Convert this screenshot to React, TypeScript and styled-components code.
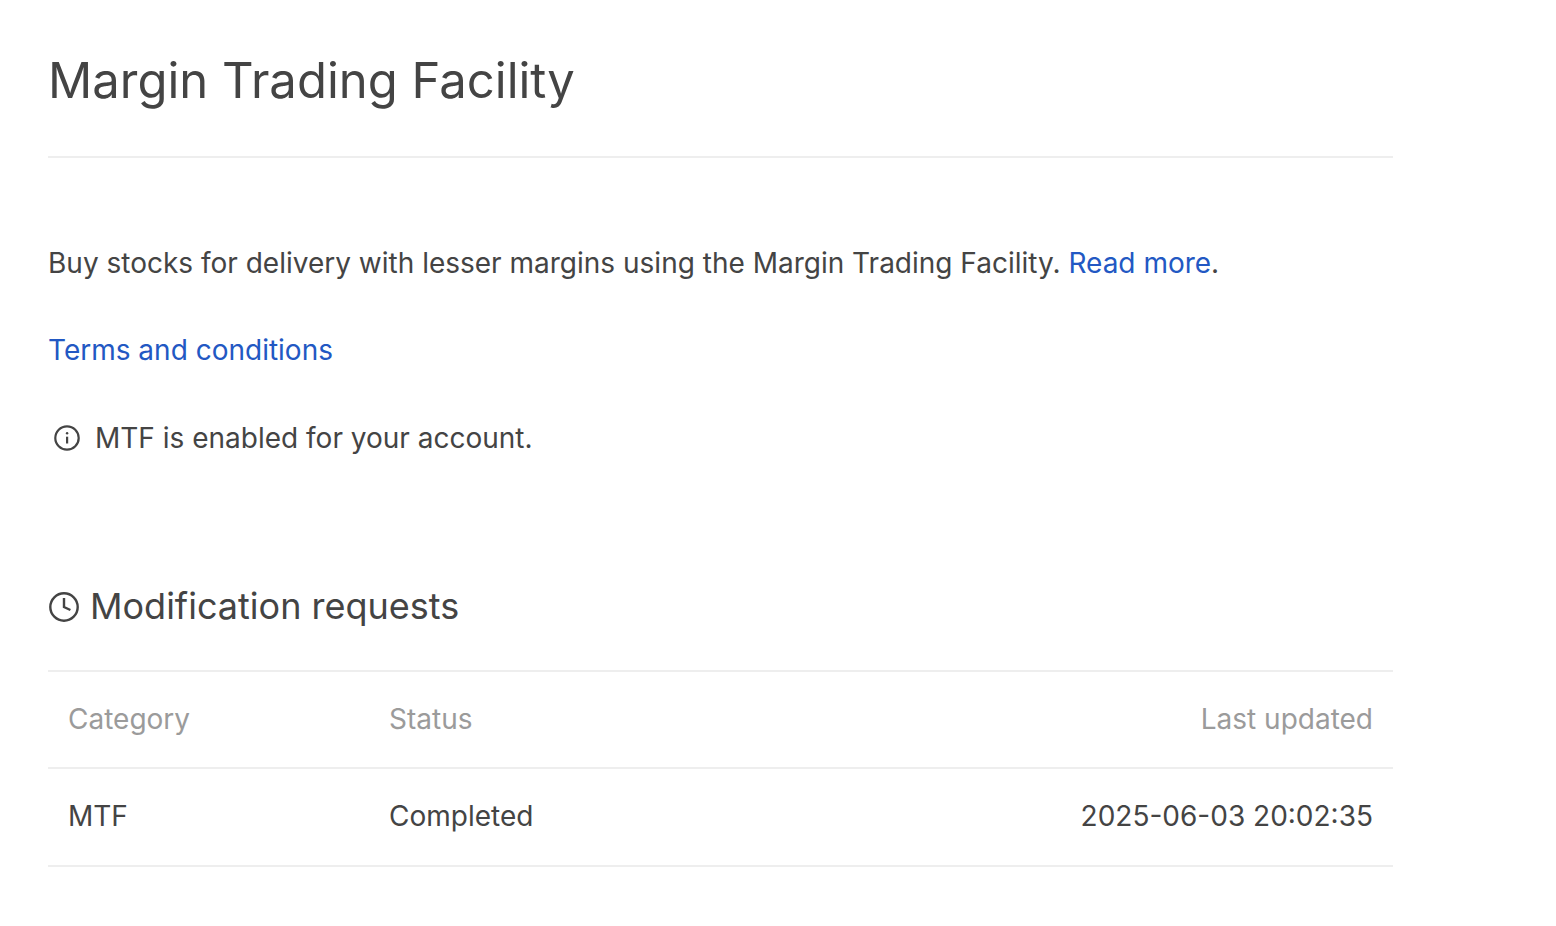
import React from "react";
import styled, { createGlobalStyle } from "styled-components";

const GlobalStyle = createGlobalStyle`
  *, *::before, *::after { box-sizing: border-box; }
  body {
    margin: 0;
    background: #fff;
    color: #444444;
    font-family: Inter, "Liberation Sans", sans-serif;
    font-size: 28px;
    line-height: 40px;
  }
`;

const Page = styled.main`
  padding: 48px 163px 60px 48px;
`;

const PageHeader = styled.header`
  padding-bottom: 42px;
  border-bottom: 2px solid #eeeeee;
`;

const Title = styled.h1`
  margin: 0;
  font-size: 49px;
  font-weight: 400;
  line-height: 66px;
`;

const Intro = styled.section`
  display: flex;
  flex-direction: column;
  gap: 47px;
  padding-top: 85px;
`;

const Paragraph = styled.p`
  margin: 0;
`;

const Link = styled.a`
  color: #2258c3;
  text-decoration: none;
`;

const Notice = styled.p`
  display: flex;
  align-items: center;
  gap: 15px;
  margin: 0;
  padding-left: 6px;
  line-height: 42px;
`;

const Requests = styled.section`
  margin-top: 123px;
`;

const SectionTitle = styled.h2`
  display: flex;
  align-items: center;
  gap: 10px;
  margin: 0 0 39px;
  font-size: 36px;
  font-weight: 400;
  line-height: 49px;
`;

const Table = styled.table`
  width: 100%;
  border-collapse: collapse;
  border-top: 2px solid #eeeeee;
  table-layout: fixed;
`;

const Row = styled.tr`
  border-bottom: 2px solid #eeeeee;
`;

const HeadCell = styled.th<{ $end?: boolean; $width?: string }>`
  width: ${(p) => p.$width ?? "auto"};
  padding: 27px 20px 28px;
  color: #9b9b9b;
  font-weight: 400;
  text-align: ${(p) => (p.$end ? "right" : "left")};
`;

const Cell = styled.td<{ $end?: boolean }>`
  padding: 27px 20px 29px;
  text-align: ${(p) => (p.$end ? "right" : "left")};
`;

const InfoIcon = () => (
  <svg width="26" height="26" viewBox="0 0 26 26" fill="none" stroke="currentColor" strokeWidth="2.2" aria-hidden="true">
    <circle cx="13" cy="13" r="11.7" />
    <path d="M13.1 11.7v6.8" />
    <circle cx="13.1" cy="8.2" r="1.2" fill="currentColor" stroke="none" />
  </svg>
);

const ClockIcon = () => (
  <svg width="32" height="32" viewBox="0 0 32 32" fill="none" stroke="currentColor" strokeWidth="2.4" aria-hidden="true">
    <circle cx="16" cy="16" r="13.7" />
    <path d="M16 7v9l6.4 3" />
  </svg>
);

const requests = [
  { category: "MTF", status: "Completed", updated: "2025-06-03 20:02:35" },
];

export default function App() {
  return (
    <>
      <GlobalStyle />
      <Page>
        <PageHeader>
          <Title>Margin Trading Facility</Title>
        </PageHeader>
        <Intro>
          <Paragraph>
            Buy stocks for delivery with lesser margins using the Margin Trading Facility.{" "}
            <Link href="#read-more">Read more</Link>.
          </Paragraph>
          <Paragraph>
            <Link href="#terms">Terms and conditions</Link>
          </Paragraph>
          <Notice>
            <InfoIcon />
            MTF is enabled for your account.
          </Notice>
        </Intro>
        <Requests>
          <SectionTitle>
            <ClockIcon />
            Modification requests
          </SectionTitle>
          <Table>
            <thead>
              <Row>
                <HeadCell scope="col" $width="321px">Category</HeadCell>
                <HeadCell scope="col">Status</HeadCell>
                <HeadCell scope="col" $end>Last updated</HeadCell>
              </Row>
            </thead>
            <tbody>
              {requests.map((r) => (
                <Row key={r.updated}>
                  <Cell>{r.category}</Cell>
                  <Cell>{r.status}</Cell>
                  <Cell $end>{r.updated}</Cell>
                </Row>
              ))}
            </tbody>
          </Table>
        </Requests>
      </Page>
    </>
  );
}
